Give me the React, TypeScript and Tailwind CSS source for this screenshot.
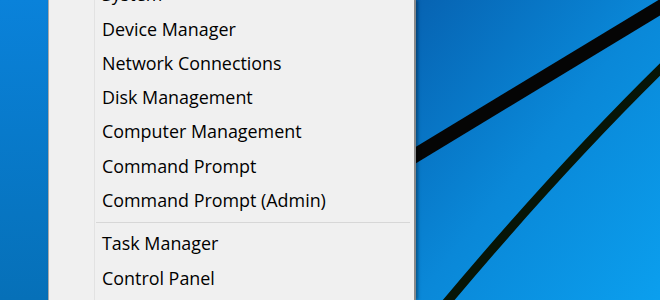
import React from 'react';

const TOP_ITEMS = [
  'System',
  'Device Manager',
  'Network Connections',
  'Disk Management',
  'Computer Management',
  'Command Prompt',
  'Command Prompt (Admin)',
];

const BOTTOM_ITEMS = ['Task Manager', 'Control Panel'];

const MenuItem: React.FC<{ label: string }> = ({ label }) => (
  <div className="h-[34.3px] flex items-center pl-[7px] text-black whitespace-nowrap">{label}</div>
);

export default function App() {
  return (
    <div className="w-[660px] h-[300px] flex overflow-hidden font-['Open_Sans',sans-serif] text-[17.9px]">
      {/* desktop strip left of the menu */}
      <div className="w-[48px] shrink-0 bg-gradient-to-b from-[#0a82da] to-[#0670b8]" />

      {/* context menu */}
      <div className="w-[368px] shrink-0 bg-[#f0f0f0] border-l border-l-[#a9a9a9] border-r-2 border-r-[#8a8a8a] flex shadow-[2px_0_3px_rgba(0,0,0,0.35)] relative z-10">
        <div className="w-[46px] shrink-0 border-r border-r-[#e2e2e2]" />
        <div className="flex-1 mt-[-22.5px] pr-[2px]">
          {TOP_ITEMS.map((item) => (
            <MenuItem key={item} label={item} />
          ))}
          <div className="h-[9px] flex items-center">
            <div className="h-[1px] w-full bg-[#d7d7d7] ml-[1px] mr-[2px]" />
          </div>
          {BOTTOM_ITEMS.map((item) => (
            <MenuItem key={item} label={item} />
          ))}
        </div>
      </div>

      {/* desktop wallpaper */}
      <div className="flex-1 bg-gradient-to-br from-[#0763b2] via-[#0a88d8] to-[#0b9fee]">
        <svg width="244" height="300" viewBox="0 0 244 300" className="block">
          <line x1="-10" y1="161" x2="256" y2="0" stroke="#050505" strokeWidth="14" />
          <path d="M 262 52 Q 150 160 26 308" fill="none" stroke="#071507" strokeWidth="9" />
        </svg>
      </div>
    </div>
  );
}
